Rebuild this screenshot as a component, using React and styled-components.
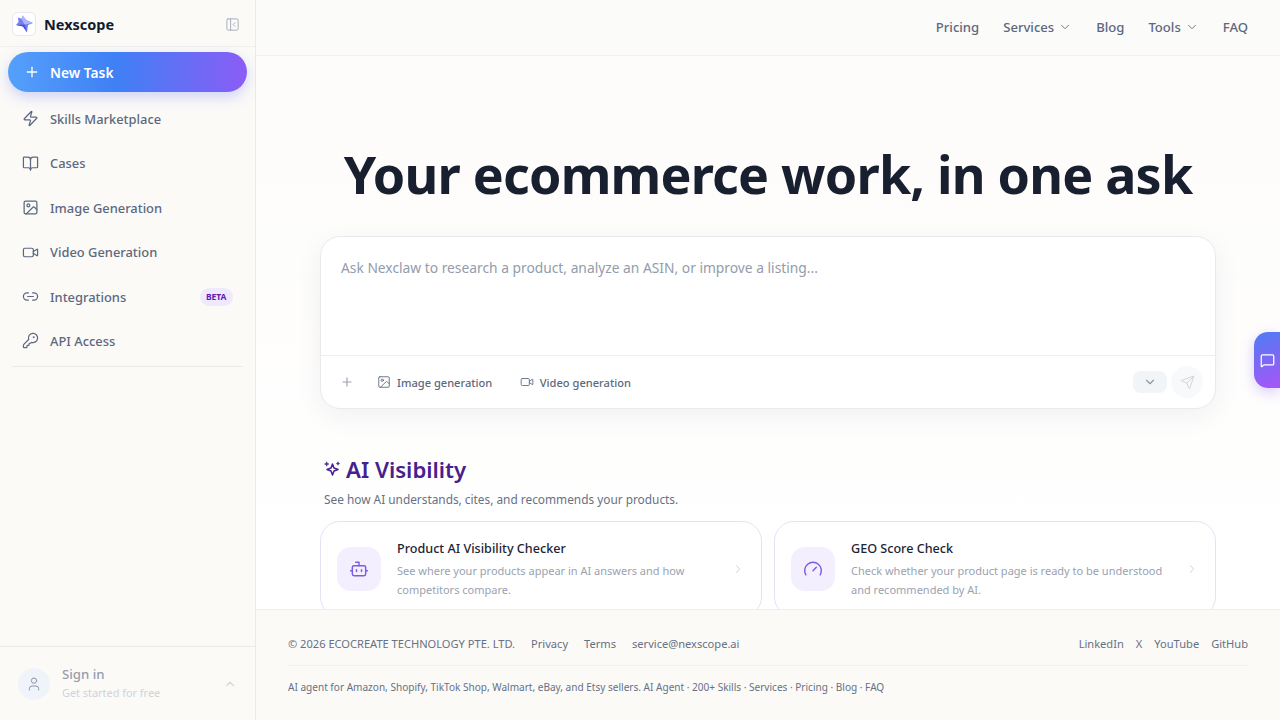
import styled, { createGlobalStyle } from 'styled-components';
import {
    Plus, Zap, BookOpen, Image, Video, Link2, KeyRound, User, ChevronUp, ChevronDown, ChevronRight,
    PanelLeftClose, Send, MessageSquare, Bot, Gauge,
} from 'lucide-react';

const Global = createGlobalStyle`
    html, body { margin: 0; height: 100%; overflow: hidden; }
    body { font-family: "Noto Sans", "Open Sans", sans-serif; background: #fff; color: #1a2233; }
    * { box-sizing: border-box; }
`;

const Shell = styled.div`
    display: flex;
    width: 1280px;
    height: 720px;
    overflow: hidden;
`;

const Sidebar = styled.aside`
    width: 256px;
    flex: none;
    display: flex;
    flex-direction: column;
    background: #fbfaf7;
    border-right: 1px solid #ebeaea;
`;

const Brand = styled.div`
    height: 47px;
    flex: none;
    display: flex;
    align-items: center;
    padding: 2px 15px 0 12px;
    border-bottom: 1px solid #f1f0ee;
`;

const LogoBox = styled.div`
    width: 24px;
    height: 24px;
    border-radius: 6px;
    background: #fff;
    border: 1px solid #e8e8ee;
    display: flex;
    align-items: center;
    justify-content: center;
`;

const BrandName = styled.span`
    margin-left: 8px;
    flex: 1;
    font-size: 14.5px;
    font-weight: 700;
    color: #131c2e;
`;

const Nav = styled.nav`
    flex: 1;
    display: flex;
    flex-direction: column;
    padding: 5px 8px 0;
`;

const NewTask = styled.button`
    height: 40px;
    flex: none;
    border: 0;
    border-radius: 20px;
    display: flex;
    align-items: center;
    gap: 10px;
    padding: 0 16px;
    color: #fff;
    font: 600 13.8px "Noto Sans", sans-serif;
    background: linear-gradient(90deg, #55a0fb 0%, #3f80f5 45%, #8b5cf6 100%);
    box-shadow: 0 5px 14px rgba(88, 110, 245, 0.28);
    margin-bottom: 4.8px;
`;

const NavRow = styled.a`
    height: 44.4px;
    flex: none;
    display: flex;
    align-items: center;
    gap: 11.5px;
    padding: 0 13.5px;
    color: #5c6880;
    font-size: 12.9px;
    font-weight: 500;
    svg { flex: none; }
`;

const NavLabel = styled.span`
    flex: 1;
`;

const Beta = styled.span`
    font-size: 8.5px;
    font-weight: 700;
    color: #5b21b6;
    background: #efe9fe;
    border-radius: 9px;
    padding: 2px 6px;
    line-height: 14px;
    margin-right: 1px;
`;

const NavRule = styled.div`
    height: 1px;
    margin: 3.2px 4px 0;
    background: #ecebe8;
`;

const Account = styled.div`
    height: 74px;
    flex: none;
    display: flex;
    align-items: center;
    padding: 0 18px;
    border-top: 1px solid #ecebe8;
    gap: 12px;
`;

const Avatar = styled.div`
    width: 32px;
    height: 32px;
    border-radius: 50%;
    background: #eff4fa;
    color: #8d96a8;
    display: flex;
    align-items: center;
    justify-content: center;
`;

const AccountText = styled.div`
    flex: 1;
    display: flex;
    flex-direction: column;
    padding-bottom: 2px;
`;

const SignIn = styled.span`
    font-size: 13.2px;
    font-weight: 500;
    line-height: 19px;
    color: #969eae;
`;

const SignSub = styled.span`
    font-size: 10.9px;
    line-height: 17px;
    color: #cfd3da;
`;

const Main = styled.main`
    flex: 1;
    min-width: 0;
    display: flex;
    flex-direction: column;
    position: relative;
    background: #fff;
`;

const Header = styled.header`
    height: 56px;
    flex: none;
    display: flex;
    align-items: center;
    justify-content: flex-end;
    gap: 24px;
    padding: 0 32px 1px;
    background: #fbfbf9;
    border-bottom: 1px solid #f0f0ee;
`;

const TopLink = styled.a`
    display: flex;
    align-items: center;
    gap: 4px;
    font-size: 13.1px;
    font-weight: 500;
    color: #5c6880;
`;

const Scroll = styled.div`
    flex: 1;
    min-height: 0;
    overflow: hidden;
    display: flex;
    flex-direction: column;
    align-items: center;
    background: linear-gradient(180deg, #fdfcfa 0%, #ffffff 100%);
`;

const Column = styled.div`
    width: 896px;
    flex: none;
`;

const Title = styled.h1`
    margin: 83px 0 0;
    height: 70px;
    line-height: 70px;
    text-align: center;
    font-size: 52px;
    font-weight: 700;
    letter-spacing: -0.8px;
    color: #18202f;
    white-space: nowrap;
`;

const Composer = styled.div`
    margin-top: 27px;
    height: 173px;
    background: #fff;
    border: 1px solid #e8eaee;
    border-radius: 20px;
    box-shadow: 0 8px 28px rgba(30, 40, 60, 0.06);
    display: flex;
    flex-direction: column;
`;

const Prompt = styled.div`
    flex: 1;
    padding: 21px 20px;
    font-size: 13.8px;
    line-height: 20px;
    color: #929cac;
    border-bottom: 1px solid #eceef1;
`;

const ComposerBar = styled.div`
    height: 52px;
    flex: none;
    display: flex;
    align-items: center;
    padding: 0 12px 0 19px;
    color: #5c6880;
`;

const AddButton = styled.span`
    display: flex;
    color: #99a2b1;
    margin-right: 23px;
`;

const Tool = styled.span`
    display: flex;
    align-items: center;
    gap: 6px;
    margin-right: 27.5px;
    font-size: 11.1px;
    font-weight: 500;
`;

const Spacer = styled.div`
    flex: 1;
`;

const ModelPick = styled.span`
    width: 34px;
    height: 22px;
    border-radius: 8px;
    background: #f1f5f8;
    color: #8f98a6;
    display: flex;
    align-items: center;
    justify-content: center;
    margin-right: 4px;
`;

const SendButton = styled.span`
    width: 32px;
    height: 32px;
    border-radius: 50%;
    background: #f8f9fa;
    color: #d0d4d9;
    display: flex;
    align-items: center;
    justify-content: center;
`;

const SectionHead = styled.h2`
    margin: 44px 0 0 4px;
    height: 32px;
    display: flex;
    align-items: center;
    gap: 5px;
    font-size: 22.2px;
    font-weight: 600;
    color: #47208f;
`;

const SectionSub = styled.p`
    margin: 4px 0 0 4px;
    font-size: 11.85px;
    line-height: 20px;
    color: #667185;
`;

const Cards = styled.div`
    margin-top: 12px;
    display: grid;
    grid-template-columns: 1fr 1fr;
    gap: 12px;
`;

const Card = styled.div`
    height: 96px;
    display: flex;
    align-items: center;
    padding: 0 16px;
    background: #fff;
    border: 1px solid #e6e2f6;
    border-radius: 20px;
`;

const CardIcon = styled.div`
    width: 44px;
    height: 44px;
    flex: none;
    border-radius: 14px;
    background: #f3effe;
    color: #7c5ce0;
    display: flex;
    align-items: center;
    justify-content: center;
    margin-right: 16px;
`;

const CardBody = styled.div`
    flex: 1;
    min-width: 0;
`;

const CardTitle = styled.div`
    font-size: 12.6px;
    font-weight: 500;
    line-height: 20px;
    color: #1d2433;
`;

const CardText = styled.div`
    margin-top: 2px;
    width: 322px;
    font-size: 11px;
    line-height: 19px;
    color: #9aa2b0;
`;

const CardArrow = styled.span`
    display: flex;
    color: #c6cbd3;
`;

const Footer = styled.footer`
    height: 111px;
    flex: none;
    padding: 12px 32px 0;
    background: #fbfaf7;
    border-top: 1px solid #efeeeb;
    color: #667185;
`;

const FootTop = styled.div`
    height: 44px;
    display: flex;
    align-items: center;
    gap: 16px;
    font-size: 11.1px;
    border-bottom: 1px solid #f1f0ed;
`;

const SocialLinks = styled.div`
    display: flex;
    gap: 12px;
`;

const FootBottom = styled.div`
    padding-top: 13px;
    font-size: 10.05px;
    line-height: 16px;
`;

const FloatChat = styled.button`
    position: absolute;
    right: 0;
    top: 332px;
    width: 26px;
    height: 56px;
    border: 0;
    padding: 0 0 0 1px;
    border-radius: 14px 0 0 14px;
    background: linear-gradient(160deg, #4f7cf4 0%, #a855f7 100%);
    color: #fff;
    display: flex;
    align-items: center;
    justify-content: center;
    box-shadow: 0 4px 14px rgba(125, 90, 240, 0.3);
`;

const Logo = () => (
    <svg width="20" height="20" viewBox="0 0 20 20">
        <path d="M8.5 1.5 12.2 6 19 9l-5 2-1 7.5-4-6-7-1.5L4.5 8 4 3.5l3.5 1.2z" fill="#7480ee" />
        <path d="M8.5 1.5 12.2 6 19 9l-8.5 1.5L7.5 4.7z" fill="#aeb5f8" />
        <path d="M2 11 10.5 10.5l2.5 8-4-6z" fill="#4a4fd4" />
    </svg>
);

const SparkIcon = () => (
    <svg width="17" height="17" viewBox="0 0 17 17" fill="none" stroke="currentColor" strokeWidth="1.5" strokeLinejoin="round">
        <path d="M8.5 3 10 7 14 8.5 10 10 8.5 14 7 10 3 8.5 7 7z" />
        <path d="M2.7.8 3.3 2.4 4.9 3 3.3 3.6 2.7 5.2 2.1 3.6.5 3 2.1 2.4z" fill="currentColor" strokeWidth="0.6" />
        <path d="M14 .8 14.5 2 15.7 2.5 14.5 3 14 4.2 13.5 3 12.3 2.5 13.5 2z" fill="currentColor" strokeWidth="0.5" />
    </svg>
);

const navItems = [
    { label: 'Skills Marketplace', icon: Zap },
    { label: 'Cases', icon: BookOpen },
    { label: 'Image Generation', icon: Image },
    { label: 'Video Generation', icon: Video },
    { label: 'Integrations', icon: Link2, beta: true },
    { label: 'API Access', icon: KeyRound },
];

const cards = [
    {
        title: 'Product AI Visibility Checker',
        text: 'See where your products appear in AI answers and how competitors compare.',
        icon: Bot,
    },
    {
        title: 'GEO Score Check',
        text: 'Check whether your product page is ready to be understood and recommended by AI.',
        icon: Gauge,
    },
];

export default function App() {
    return (
        <Shell>
            <Global />
            <Sidebar>
                <Brand>
                    <LogoBox><Logo /></LogoBox>
                    <BrandName>Nexscope</BrandName>
                    <PanelLeftClose size={15} color="#a3abb8" strokeWidth={1.5} />
                </Brand>
                <Nav>
                    <NewTask><Plus size={16} />New Task</NewTask>
                    {navItems.map(({ label, icon: Icon, beta }) => (
                        <NavRow key={label}>
                            <Icon size={17} strokeWidth={1.75} />
                            <NavLabel>{label}</NavLabel>
                            {beta && <Beta>BETA</Beta>}
                        </NavRow>
                    ))}
                    <NavRule />
                </Nav>
                <Account>
                    <Avatar><User size={16} strokeWidth={1.5} /></Avatar>
                    <AccountText>
                        <SignIn>Sign in</SignIn>
                        <SignSub>Get started for free</SignSub>
                    </AccountText>
                    <ChevronUp size={14} color="#d3d7dd" />
                </Account>
            </Sidebar>
            <Main>
                <Header>
                    <TopLink>Pricing</TopLink>
                    <TopLink>Services<ChevronDown size={14} strokeWidth={1.5} /></TopLink>
                    <TopLink>Blog</TopLink>
                    <TopLink>Tools<ChevronDown size={14} strokeWidth={1.5} /></TopLink>
                    <TopLink>FAQ</TopLink>
                </Header>
                <Scroll>
                    <Column>
                        <Title>Your ecommerce work, in one ask</Title>
                        <Composer>
                            <Prompt>Ask Nexclaw to research a product, analyze an ASIN, or improve a listing...</Prompt>
                            <ComposerBar>
                                <AddButton><Plus size={14} /></AddButton>
                                <Tool><Image size={14} strokeWidth={1.5} />Image generation</Tool>
                                <Tool><Video size={14} strokeWidth={1.5} />Video generation</Tool>
                                <Spacer />
                                <ModelPick><ChevronDown size={14} /></ModelPick>
                                <SendButton><Send size={15} strokeWidth={1.5} /></SendButton>
                            </ComposerBar>
                        </Composer>
                        <SectionHead>
                            <SparkIcon />
                            AI Visibility
                        </SectionHead>
                        <SectionSub>See how AI understands, cites, and recommends your products.</SectionSub>
                        <Cards>
                            {cards.map(({ title, text, icon: Icon }) => (
                                <Card key={title}>
                                    <CardIcon><Icon size={20} strokeWidth={1.75} /></CardIcon>
                                    <CardBody>
                                        <CardTitle>{title}</CardTitle>
                                        <CardText>{text}</CardText>
                                    </CardBody>
                                    <CardArrow><ChevronRight size={14} strokeWidth={1.5} /></CardArrow>
                                </Card>
                            ))}
                        </Cards>
                    </Column>
                </Scroll>
                <Footer>
                    <FootTop>
                        <span>© 2026 ECOCREATE TECHNOLOGY PTE. LTD.</span>
                        <span>Privacy</span>
                        <span>Terms</span>
                        <span>service@nexscope.ai</span>
                        <Spacer />
                        <SocialLinks>
                            <span>LinkedIn</span>
                            <span>X</span>
                            <span>YouTube</span>
                            <span>GitHub</span>
                        </SocialLinks>
                    </FootTop>
                    <FootBottom>
                        AI agent for Amazon, Shopify, TikTok Shop, Walmart, eBay, and Etsy sellers. AI Agent · 200+ Skills · Services · Pricing · Blog · FAQ
                    </FootBottom>
                </Footer>
                <FloatChat><MessageSquare size={15} strokeWidth={2} /></FloatChat>
            </Main>
        </Shell>
    );
}
